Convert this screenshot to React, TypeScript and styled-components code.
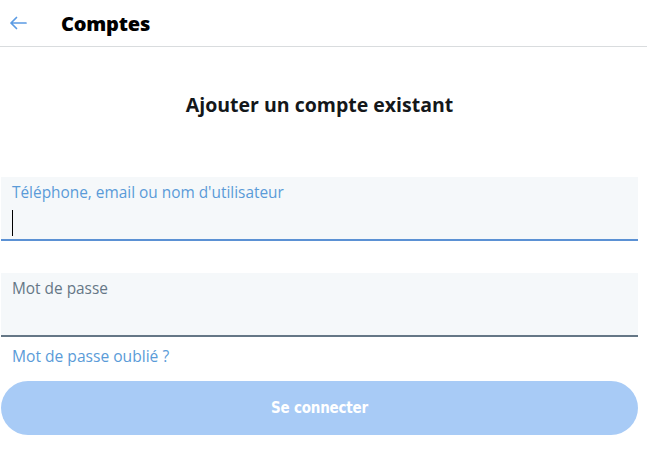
import React from 'react'
import styled, { createGlobalStyle } from 'styled-components'

const GlobalStyle = createGlobalStyle`
    html, body {
        margin: 0;
        padding: 0;
        background: #ffffff;
    }
    body {
        font-family: "Open Sans", "Noto Sans", sans-serif;
        color: #14171a;
    }
`

const Header = styled.header`
    height: 47px;
    display: flex;
    align-items: center;
    border-bottom: 1px solid #d9dcde;
    box-sizing: border-box;
`

const BackButton = styled.button`
    width: 36px;
    height: 36px;
    padding: 0;
    border: none;
    background: transparent;
    display: flex;
    align-items: center;
    justify-content: center;
    cursor: pointer;
    color: #5b9be4;
`

const HeaderTitle = styled.h1`
    margin: 0 0 0 25px;
    font-size: 20px;
    font-weight: 800;
    letter-spacing: -0.2px;
    color: #000;
`

const Main = styled.main`
    padding: 0 9px 0 1px;
    display: flex;
    flex-direction: column;
`

const Title = styled.h2`
    margin: 44px 0 0;
    height: 28px;
    line-height: 28px;
    text-align: center;
    font-size: 19.5px;
    font-weight: 700;
    color: #14171a;
`

const Field = styled.label<{ $focused?: boolean; $gap: number }>`
    display: flex;
    flex-direction: column;
    margin-top: ${({ $gap }) => $gap}px;
    height: 64px;
    box-sizing: border-box;
    padding: 5px 11px 0;
    background: #f5f8fa;
    border-bottom: 2px solid ${({ $focused }) => ($focused ? '#5b91d4' : '#657786')};
`

const FieldLabel = styled.span<{ $focused?: boolean }>`
    font-size: 15.4px;
    line-height: 22px;
    color: ${({ $focused }) => ($focused ? '#5a9bd8' : '#657786')};
`

const Caret = styled.span`
    display: block;
    width: 1px;
    height: 26px;
    margin-top: 6px;
    background: #000;
`

const Link = styled.a`
    margin-top: 8px;
    padding-left: 11px;
    font-size: 15.6px;
    line-height: 22px;
    color: #5a9bd8;
    text-decoration: none;
`

const SubmitButton = styled.button`
    margin-top: 14px;
    height: 54px;
    border: none;
    border-radius: 27px;
    background: #a8cbf6;
    color: #ffffff;
    font-family: "DejaVu Sans Condensed", "DejaVu Sans", sans-serif;
    font-size: 15px;
    font-weight: 700;
    letter-spacing: -0.2px;
    cursor: default;
`

const ArrowLeft = () => (
    <svg width="18" height="14" viewBox="0 0 18 14" fill="none">
        <path d="M17 7H2M7.5 1.5L2 7l5.5 5.5" stroke="currentColor" strokeWidth="1.7" strokeLinecap="round" strokeLinejoin="round" />
    </svg>
)

const App: React.FC = () => {
    return (
        <>
            <GlobalStyle />
            <Header>
                <BackButton aria-label="Retour">
                    <ArrowLeft />
                </BackButton>
                <HeaderTitle>Comptes</HeaderTitle>
            </Header>
            <Main>
                <Title>Ajouter un compte existant</Title>
                <Field $focused $gap={58}>
                    <FieldLabel $focused>Téléphone, email ou nom d'utilisateur</FieldLabel>
                    <Caret />
                </Field>
                <Field $gap={32}>
                    <FieldLabel>Mot de passe</FieldLabel>
                </Field>
                <Link href="#">Mot de passe oublié ?</Link>
                <SubmitButton disabled>Se connecter</SubmitButton>
            </Main>
        </>
    )
}

export default App
